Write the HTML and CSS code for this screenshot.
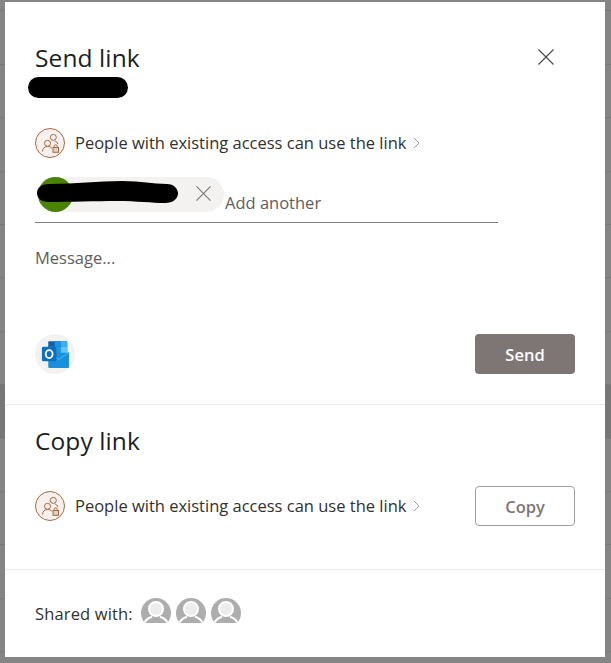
FILE: index.html
```html
<!DOCTYPE html>
<html lang="en">
<head>
    <meta charset="UTF-8">
    <meta name="viewport" content="width=device-width, initial-scale=1.0">
    <title>Send link</title>
    <link rel="stylesheet" href="styles.css">
</head>
<body>

<svg class="icon-defs" width="0" height="0">
    <symbol id="access" viewBox="0 0 30 30">
        <circle cx="15" cy="15" r="14.5" fill="#f6f1ee" stroke="#a9683f"/>
        <g fill="none" stroke="#a9683f" stroke-width="1">
            <circle cx="18.300" cy="9.400" r="3"/>
            <circle cx="12.500" cy="15.300" r="3"/>
            <path d="M7.500 23.500c0-3.200 2.200-5 5-5s4 1 4.500 2"/>
            <path d="M20 13c1.500.4 2.500 1.500 2.800 3"/>
            <rect x="18" y="19.500" width="5.500" height="4.800" fill="#a9683f" fill-opacity=".25"/>
            <path d="M19.200 19.500v-1.200a1.500 1.500 0 0 1 3 0v1.200"/>
        </g>
    </symbol>
    <symbol id="person" viewBox="0 0 30 25">
        <circle cx="15" cy="15" r="15" fill="#adadad"/>
        <circle cx="15" cy="11" r="7" fill="#ececec" stroke="white" stroke-width="2"/>
        <path d="M3.500 24.500c2-3.500 4.500-5 7.500-5.800M26.500 24.500c-2-3.500-4.500-5-7.500-5.800" fill="none" stroke="white" stroke-width="2"/>
    </symbol>
</svg>

<div class="dialog">
    <section class="send-section">
        <div class="send-header">
            <div>
                <h2 class="title">Send link</h2>
                <div class="scribble-sub"></div>
            </div>
            <svg class="close-icon" viewBox="0 0 16 16"><path d="M.5.500l15 15M15.500.500l-15 15"/></svg>
        </div>

        <div class="access-row access-row-send">
            <svg class="access-icon"><use href="#access"/></svg>
            <span class="access-label">People with existing access can use the link</span>
            <svg class="chevron" viewBox="0 0 7 12"><path d="M1 1l5 5-5 5"/></svg>
        </div>

        <div class="recipient-field">
            <div class="chip">
                <span class="chip-avatar"></span>
                <svg class="chip-remove" viewBox="0 0 16 16"><path d="M.5.500l15 15M15.500.500l-15 15"/></svg>
                <svg class="scribble-chip" viewBox="0 0 141 23"><path d="M12 3C40 3 60 0 85 0c20 0 30 3 45 3 7 0 11 5 11 9 0 6-5 10-13 10-13 0-28-2-48-2-20 0-50 1-68 1C4 21 0 17 0 12 0 7 4 3 12 3z"/></svg>
            </div>
            <span class="add-another">Add another</span>
        </div>

        <div class="message">Message...</div>

        <div class="send-footer">
            <div class="outlook-badge">
                <svg class="outlook-icon" viewBox="0 0 32 32">
                    <path fill="#0f5ea8" d="M9 1.500h18.500a1.500 1.500 0 0 1 1.500 1.500v12H8V2.500a1 1 0 0 1 1-1z"/>
                    <rect x="8" y="7" width="7" height="7" fill="#1380c9"/>
                    <rect x="15" y="1.500" width="7" height="6" fill="#1c95dd"/>
                    <rect x="15" y="7.500" width="7" height="7" fill="#1d9be2"/>
                    <rect x="22" y="1.500" width="7" height="6" fill="#3fb0ec"/>
                    <rect x="22" y="7.500" width="7" height="7" fill="#62c5f3"/>
                    <path fill="#1a8fdc" d="M8 14h23v15.500a1.500 1.500 0 0 1-1.500 1.500h-20a1.500 1.500 0 0 1-1.500-1.500z"/>
                    <path fill="#36abec" d="M31 13l-11.500 7.500L8 14v1l11.500 7L31 15z"/>
                    <rect x="1" y="7.500" width="16" height="16" rx="1.500" fill="#0e6fbe"/>
                    <ellipse cx="9" cy="15.500" rx="3.800" ry="4.400" fill="none" stroke="#fff" stroke-width="2"/>
                </svg>
            </div>
            <button class="btn btn-send">Send</button>
        </div>
    </section>

    <section class="copy-section">
        <h2 class="title">Copy link</h2>
        <div class="copy-row">
            <div class="access-row">
                <svg class="access-icon"><use href="#access"/></svg>
                <span class="access-label">People with existing access can use the link</span>
                <svg class="chevron" viewBox="0 0 7 12"><path d="M1 1l5 5-5 5"/></svg>
            </div>
            <button class="btn btn-copy">Copy</button>
        </div>
    </section>

    <section class="shared-section">
        <span class="shared-label">Shared with:</span>
        <svg class="person"><use href="#person"/></svg>
        <svg class="person"><use href="#person"/></svg>
        <svg class="person"><use href="#person"/></svg>
    </section>
</div>

</body>
</html>
```

FILE: styles.css
```css
* {
    box-sizing: border-box;
}

html, body {
    height: 100%;
}

/* Dimmed page behind the dialog, with its table rows just showing */
body {
    margin: 0;
    padding: 2px 6px 6px 5px;
    background-color: #858585;
    background-image:
        linear-gradient(to bottom, transparent 385px, #777 385px, #777 438px, transparent 438px),
        repeating-linear-gradient(to bottom, transparent 0, transparent 10.4px, #7a7a7a 10.4px, #7a7a7a 11.4px, transparent 11.4px, transparent 53.4px);
    font-family: "Open Sans", "Noto Sans", sans-serif;
    color: #323130;
    overflow: hidden;
}

.icon-defs {
    position: absolute;
}

.dialog {
    height: 655px;
    background-color: white;
    display: flex;
    flex-direction: column;
}

.title {
    margin: 0;
    font-size: 24.5px;
    line-height: 32px;
    font-weight: 400;
    color: #201f1e;
    letter-spacing: 0.1px;
}

/* Black marker over the names */
.scribble-sub {
    width: 100px;
    height: 21px;
    margin: 3px 0 0 -7px;
    background-color: black;
    border-radius: 11px;
}

.scribble-chip {
    position: absolute;
    left: 0;
    top: 4px;
    width: 141px;
    height: 23px;
    fill: black;
}

/* Send section */
.send-section {
    height: 403px;
    padding: 40px 30px 0 30px;
    border-bottom: 1px solid #edebe9;
}

.send-header {
    display: flex;
    justify-content: space-between;
    align-items: flex-start;
}

.close-icon {
    width: 16px;
    height: 16px;
    margin-top: 7px;
    margin-right: 21px;
    fill: none;
    stroke: #484644;
    stroke-width: 1.1;
}

.access-row {
    display: flex;
    align-items: center;
    font-size: 16.5px;
    white-space: nowrap;
}

.access-row-send {
    margin-top: 30px;
}

.access-icon {
    width: 30px;
    height: 30px;
    margin-right: 10px;
}

.access-label {
    margin-bottom: 2px;
}

.chevron {
    width: 7px;
    height: 12px;
    margin-left: 7px;
    fill: none;
    stroke: #a19f9d;
    stroke-width: 1;
}

.recipient-field {
    width: 463px;
    height: 46px;
    margin-top: 19px;
    border-bottom: 1px solid #7f7d7b;
    display: flex;
    align-items: flex-end;
}

.chip {
    position: relative;
    width: 187px;
    height: 35px;
    margin: 0 1px 10px 2px;
    background-color: #f3f2f1;
    border-radius: 18px;
    flex-shrink: 0;
}

.chip-avatar {
    display: block;
    width: 35px;
    height: 35px;
    margin-left: 1px;
    border-radius: 50%;
    background-color: #498205;
}

.chip-remove {
    position: absolute;
    right: 13px;
    top: 9px;
    width: 15px;
    height: 15px;
    fill: none;
    stroke: #7a7876;
    stroke-width: 1.2;
}

.add-another {
    font-size: 16.5px;
    line-height: 22px;
    color: #605e5c;
    padding-bottom: 8px;
}

.message {
    margin-top: 24px;
    font-size: 16.5px;
    line-height: 22px;
    color: #605e5c;
}

.send-footer {
    margin-top: 65px;
    display: flex;
    justify-content: space-between;
    align-items: center;
}

.outlook-badge {
    width: 40px;
    height: 40px;
    border-radius: 50%;
    background-color: #f3f2f1;
    display: flex;
    align-items: center;
    justify-content: center;
}

.outlook-icon {
    width: 29px;
    height: 29px;
}

/* Buttons */
.btn {
    width: 100px;
    height: 40px;
    border-radius: 4px;
    font-family: inherit;
    font-size: 16.5px;
    font-weight: 600;
}

.btn-send {
    background-color: #7e7575;
    border: none;
    color: white;
}

.btn-copy {
    background-color: white;
    border: 1px solid #a19f9d;
    color: #7e7575;
}

/* Copy section */
.copy-section {
    height: 165px;
    padding: 20px 30px 0 30px;
    border-bottom: 1px solid #edebe9;
}

.copy-row {
    margin-top: 29px;
    display: flex;
    justify-content: space-between;
    align-items: center;
}

/* Shared with */
.shared-section {
    flex: 1;
    padding: 0 30px;
    display: flex;
    align-items: center;
    gap: 5px;
}

.shared-label {
    font-size: 16.5px;
    font-weight: 500;
    letter-spacing: 0.15px;
    margin-right: 3px;
}

.person {
    width: 30px;
    height: 25px;
    margin-top: -6px;
}
```
